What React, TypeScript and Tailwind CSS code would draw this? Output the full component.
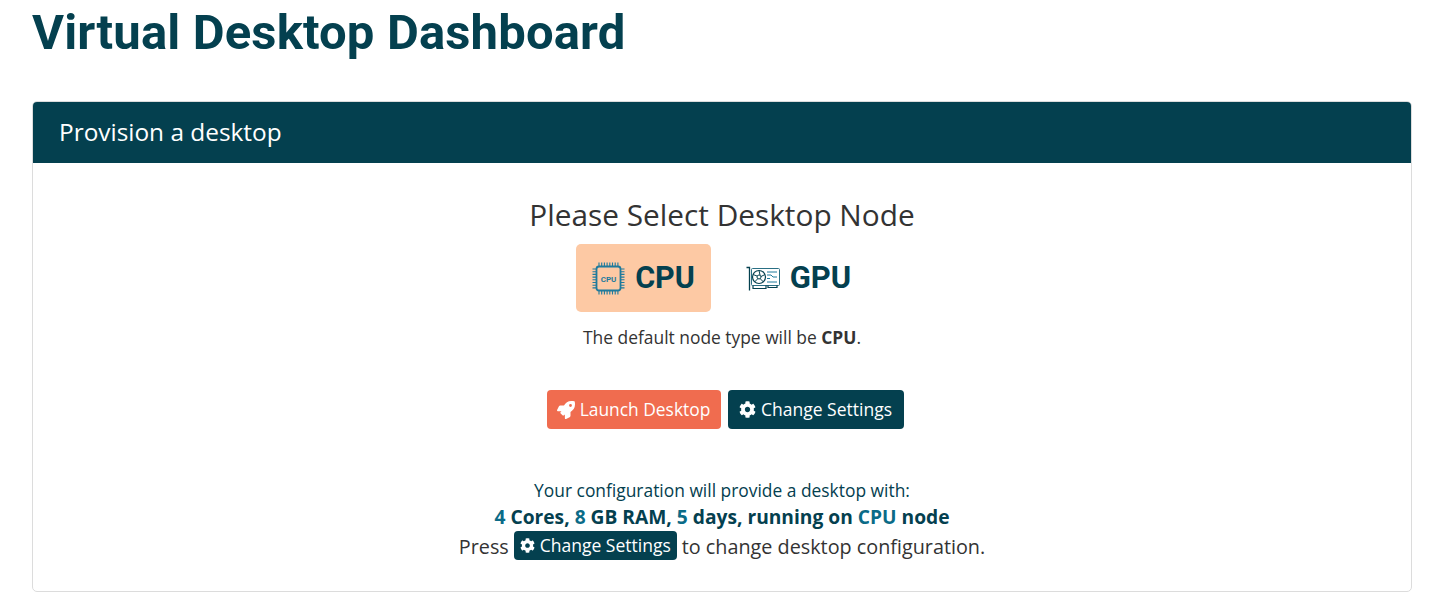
import React from "react";
import { FaRocket, FaCog } from "react-icons/fa";

function CpuIcon() {
  const ticks = [0, 1, 2, 3, 4, 5, 6, 7];
  return (
    <svg width="33" height="33" viewBox="0 0 33 33" fill="none" stroke="#1f7a9c" strokeWidth="1.1">
      <rect x="4.5" y="4.5" width="24" height="24" rx="2.5" strokeWidth="1.8" />
      {ticks.map((i) => (
        <path key={i} d={`M${7 + i * 2.7} 0.5V4M${7 + i * 2.7} 29V32.5M0.5 ${7 + i * 2.7}H4M29 ${7 + i * 2.7}H32.5`} />
      ))}
      <text x="16.5" y="19.5" textAnchor="middle" fontSize="8" fontWeight="700" fill="#1f7a9c" stroke="none" fontFamily="'Roboto', sans-serif">CPU</text>
    </svg>
  );
}

function GpuIcon() {
  return (
    <svg width="34" height="26" viewBox="0 0 34 26" fill="none" stroke="#04404f" strokeWidth="1">
      <path d="M0.5 2.5H3.5V25.5M3.5 2.5V25" strokeWidth="1.3" />
      <rect x="5.5" y="3.5" width="28" height="17" rx="1" stroke="#2a6f84" />
      <circle cx="13" cy="12" r="6.5" strokeWidth="1.2" />
      <circle cx="13" cy="12" r="2" />
      <path d="M13 5.5L14 10M7 9.5L11 11M8.5 17L12 13.5M17.5 17L14 13.5M19 9.5L15 11.5" />
      <path d="M21 7H31M21 10H25L27 12H31M21 13.5H24M21 17H31" stroke="#1f7a9c" />
      <path d="M7 20.5V23.5H20V20.5M22 20.5V22.5H31V20.5" strokeWidth="1.2" />
    </svg>
  );
}

const sans = "font-['Open_Sans','Liberation_Sans',sans-serif]";

function SettingsButton({ small }: { small?: boolean }) {
  return small ? (
    <span className="mx-[5px] inline-flex h-[29px] items-center gap-[5px] rounded-[4px] bg-[#04404f] px-[6px] align-[1px] text-[17.5px] text-white">
      <FaCog className="h-[15px] w-[15px]" />
      Change Settings
    </span>
  ) : (
    <button className="flex h-[39px] w-[176px] items-center justify-center gap-[5px] rounded-[4px] bg-[#04404f] text-[17.5px] text-white">
      <FaCog className="h-[17px] w-[17px]" />
      Change Settings
    </button>
  );
}

export default function App() {
  return (
    <div className={`min-h-[607px] bg-white px-[32px] ${sans}`}>
      <h1 className="pt-[6px] font-['Roboto',sans-serif] text-[49px] leading-[54px] font-bold tracking-[0.15px] text-[#04404f]">
        Virtual Desktop Dashboard
      </h1>
      <div className="mt-[41px] w-[1380px] overflow-hidden rounded-[5px] border border-[#dcdcdc]">
        <div className="flex h-[61px] items-center bg-[#04404f] px-[26px] pb-[1px] text-[24.4px] text-white">Provision a desktop</div>
        <div className="flex h-[428px] flex-col items-center text-[#333333]">
          <h2 className="mt-[34px] text-[29.8px] leading-[36px]">Please Select Desktop Node</h2>
          <div className="mt-[11px] mr-[2px] flex items-center gap-[20px]">
            <div className="flex h-[68px] w-[135px] items-center justify-center gap-[10px] rounded-[5px] bg-[#fdc9a4]">
              <CpuIcon />
              <span className="font-['Roboto',sans-serif] text-[30.5px] font-bold text-[#04404f]">CPU</span>
            </div>
            <div className="flex h-[68px] w-[135px] items-center justify-center gap-[10px]">
              <GpuIcon />
              <span className="font-['Roboto',sans-serif] text-[31px] font-bold text-[#04404f]">GPU</span>
            </div>
          </div>
          <p className="mt-[13px] text-[17.4px] leading-[24px]">
            The default node type will be <b>CPU</b>.
          </p>
          <div className="mt-[41px] ml-[6px] flex gap-[7px]">
            <button className="flex h-[39px] w-[174px] items-center justify-center gap-[5px] rounded-[4px] bg-[#f06c4f] text-[17.4px] text-white">
              <FaRocket className="h-[18px] w-[18px]" />
              Launch Desktop
            </button>
            <SettingsButton />
          </div>
          <p className="mt-[49px] text-[17.4px] leading-[24px] text-[#04404f]">Your configuration will provide a desktop with:</p>
          <p className="mt-[2px] text-[19.2px] leading-[26px] font-bold text-[#04404f]">
            <span className="text-[#0b6b87]">4</span> Cores, <span className="text-[#0b6b87]">8</span> GB RAM,{" "}
            <span className="text-[#0b6b87]">5</span> days, running on <span className="text-[#0b6b87]">CPU</span> node
          </p>
          <p className="mt-[1px] text-[19.8px] leading-[29px]">
            Press<SettingsButton small />to change desktop configuration.
          </p>
        </div>
      </div>
    </div>
  );
}
